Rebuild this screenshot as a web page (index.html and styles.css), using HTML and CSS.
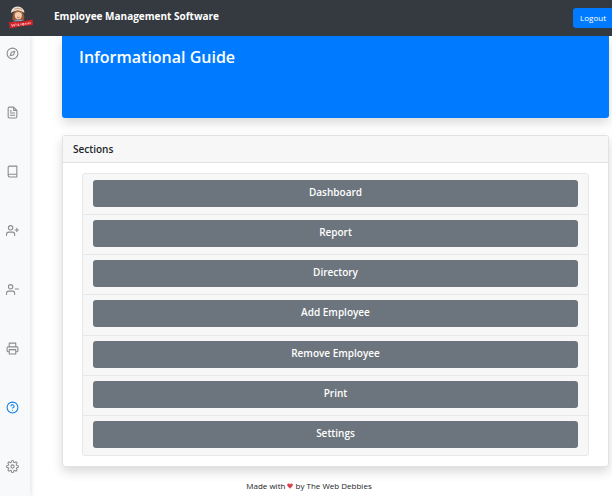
FILE: index.html
```html
<!DOCTYPE html>
<html lang="en">
<head>
<meta charset="utf-8">
<title>Employee Management Software</title>
<link rel="stylesheet" href="styles.css">
</head>
<body>
<header class="navbar">
  <svg class="logo" viewBox="0 0 26 24" aria-hidden="true">
    <path d="M4.500 14.500 Q4 8 6.500 5.500 L14 5.500 Q17 9 16 14.500Z" fill="#9a5a38"/>
    <path d="M3 7 Q3 1 9.500 .5 Q16 1 16.500 7 Q14 4.500 9.800 4.500 Q5.500 4.500 3 7Z" fill="#eadfce"/>
    <path d="M6 3 Q10 1 14 3 L14 3.800 Q10 2.300 6 3.800Z" fill="#c79a78"/>
    <ellipse cx="10.300" cy="9" rx="3.600" ry="4.200" fill="#f3cbae"/>
    <path d="M6.500 8 Q7 4.500 10.300 4.600 Q13.500 4.500 14 8 Q12 5.800 10.300 6 Q8.500 5.800 6.500 8Z" fill="#b0663c"/>
    <path d="M9 11 Q10.300 12.200 11.600 11" stroke="#c0392b" stroke-width=".7" fill="none"/>
    <path d="M5 15.500 Q10 12 15.500 15Z" fill="#7fa6cc"/>
    <path d="M1 16 Q12 16.500 24.500 13.500 L25 19 Q13 19.500 1.800 22.500Z" fill="#d2232a"/>
    <path d="M3.500 18 L4.500 20.500 L5.500 18.500 L6.500 20.200 L7.300 17.500 M9 17.700 V19.700 M10.500 17.700 V19.500 H11.500 M13 17.400 V19.200 M14.500 17.500 H16 V19 H14.500Z M17.500 17 V18.500 M19 16.700 V18.500 M20.500 16.500 V18.300 M22 16 V18" stroke="#f6c9cb" stroke-width=".8" fill="none"/>
  </svg>
  <span class="brand">Employee Management Software</span>
  <button class="logout" type="button">Logout</button>
</header>
<div class="shell">
  <nav class="sidebar" aria-label="Main">
    <a href="#" aria-label="Dashboard"><svg viewBox="0 0 24 24"><circle cx="12" cy="12" r="10"/><path d="M16.240 7.760 14.120 14.120 7.760 16.240 9.880 9.880Z"/></svg></a>
    <a href="#" aria-label="Report"><svg viewBox="0 0 24 24"><path d="M14 2H6a2 2 0 0 0-2 2v16a2 2 0 0 0 2 2h12a2 2 0 0 0 2-2V8z M14 2v6h6 M16 13H8 M16 17H8 M10 9H8"/></svg></a>
    <a href="#" aria-label="Directory"><svg viewBox="0 0 24 24"><path d="M4 19.500A2.500 2.500 0 0 1 6.500 17H20 M6.500 2H20v20H6.500A2.500 2.500 0 0 1 4 19.500v-15A2.500 2.500 0 0 1 6.500 2z"/></svg></a>
    <a href="#" aria-label="Add Employee"><svg viewBox="0 0 24 24"><path d="M16 21v-2a4 4 0 0 0-4-4H5a4 4 0 0 0-4 4v2 M20 8v6 M23 11h-6"/><circle cx="8.500" cy="7" r="4"/></svg></a>
    <a href="#" aria-label="Remove Employee"><svg viewBox="0 0 24 24"><path d="M16 21v-2a4 4 0 0 0-4-4H5a4 4 0 0 0-4 4v2 M23 11h-6"/><circle cx="8.500" cy="7" r="4"/></svg></a>
    <a href="#" aria-label="Print"><svg viewBox="0 0 24 24"><path d="M6 9V2h12v7 M6 18H4a2 2 0 0 1-2-2v-5a2 2 0 0 1 2-2h16a2 2 0 0 1 2 2v5a2 2 0 0 1-2 2h-2 M6 14h12v8H6z"/></svg></a>
    <a href="#" class="active" aria-label="Help"><svg viewBox="0 0 24 24"><circle cx="12" cy="12" r="10"/><path d="M9.090 9a3 3 0 0 1 5.830 1c0 2-3 3-3 3 M12 17h.01"/></svg></a>
    <a href="#" aria-label="Settings"><svg viewBox="0 0 24 24"><circle cx="12" cy="12" r="3"/><path d="M19.400 15a1.650 1.650 0 0 0 .33 1.820l.06.06a2 2 0 0 1-2.830 2.830l-.06-.06a1.650 1.650 0 0 0-2.800 1.170V21a2 2 0 0 1-4 0v-.09A1.650 1.650 0 0 0 7.180 19.730l-.06.06a2 2 0 0 1-2.830-2.830l.06-.06A1.650 1.650 0 0 0 3.180 14H3a2 2 0 0 1 0-4h.09A1.650 1.650 0 0 0 4.270 7.180l-.06-.06a2 2 0 0 1 2.830-2.830l.06.06A1.650 1.650 0 0 0 10 3.180V3a2 2 0 0 1 4 0v.09a1.650 1.650 0 0 0 2.820 1.180l.06-.06a2 2 0 0 1 2.830 2.830l-.06.06A1.650 1.650 0 0 0 20.820 10H21a2 2 0 0 1 0 4h-.09a1.650 1.650 0 0 0-1.510 1z"/></svg></a>
  </nav>
  <div class="content">
    <main>
      <section class="banner"><h1>Informational Guide</h1></section>
      <section class="card">
        <h2>Sections</h2>
        <ul class="sections">
          <li><button type="button">Dashboard</button></li>
          <li><button type="button">Report</button></li>
          <li><button type="button">Directory</button></li>
          <li><button type="button">Add Employee</button></li>
          <li><button type="button">Remove Employee</button></li>
          <li><button type="button">Print</button></li>
          <li><button type="button">Settings</button></li>
        </ul>
      </section>
    </main>
    <footer>Made with <svg class="heart" viewBox="0 0 16 16" role="img" aria-label="love"><path d="M8 15 2 8.500C-1 5 1 1.500 4.300 1.500 6 1.500 7.300 2.500 8 4c.7-1.500 2-2.500 3.700-2.500C15 1.500 17 5 14 8.500z"/></svg> by The Web Debbies</footer>
  </div>
</div>
</body>
</html>
```
FILE: styles.css
```css
* { box-sizing: border-box; }

body {
  margin: 0;
  min-height: 100vh;
  display: flex;
  flex-direction: column;
  overflow-x: hidden;
  background: #fff;
  color: #212529;
  font-family: "Open Sans", "Noto Sans", sans-serif;
  font-size: 10px;
}

button {
  border: 0;
  border-radius: 3px;
  color: #fff;
  font: inherit;
}

.navbar {
  display: flex;
  align-items: center;
  height: 36px;
  padding-left: 8px;
  background: #343a40;
  position: relative;
  z-index: 2;
}

.logo { width: 26px; height: 24px; }

.brand {
  margin-left: 20px;
  padding-bottom: 4px;
  color: #fff;
  font-weight: 700;
}

.logout {
  height: 20px;
  margin-left: auto;
  padding: 0 6px 2px 7px;
  border-radius: 3px 0 0 3px;
  background: #007bff;
  font-size: 8px;
}

.shell { flex: 1; display: flex; }

.sidebar {
  display: flex;
  flex-direction: column;
  gap: 46px;
  width: 30px;
  padding: 11px 6px;
  background: #f8f9fa;
  box-shadow: 1px 0 5px rgba(0, 0, 0, .12);
}

.sidebar a { display: block; height: 13px; color: #8c8c8c; }
.sidebar .active { color: #0f7fee; }

.sidebar svg {
  display: block;
  width: 13px;
  height: 13px;
  fill: none;
  stroke: currentColor;
  stroke-width: 2;
  stroke-linecap: round;
  stroke-linejoin: round;
}

.content { flex: 1; min-width: 0; }

main { padding: 0 3px 0 32px; }

.banner {
  min-height: 82px;
  padding: 8px 17px;
  border-radius: 0 0 3px 3px;
  background: #007bff;
  box-shadow: 0 5px 11px rgba(0, 0, 0, .15);
}

h1 {
  margin: 0;
  color: #fff;
  font-size: 16px;
  line-height: 26px;
  font-weight: 600;
}

.card {
  margin-top: 17px;
  border: 1px solid #e2e2e2;
  border-radius: 3px;
  background: #fff;
  box-shadow: 0 5px 11px rgba(0, 0, 0, .15);
}

h2 {
  margin: 0;
  padding: 0 10px;
  border-bottom: 1px solid #e2e2e2;
  background: #f7f7f7;
  font-size: 10px;
  line-height: 26px;
  font-weight: 600;
}

.sections {
  display: grid;
  grid-auto-rows: 1fr;
  min-height: 283px;
  margin: 10px 19px;
  padding: 0;
  border: 1px solid #e8e8e8;
  border-radius: 3px;
  background: #f7f7f7;
  list-style: none;
}

.sections li { display: flex; align-items: start; padding: 6px 10px; }
.sections li + li { padding-top: 5px; border-top: 1px solid #e8e8e8; }

.sections button {
  width: 100%;
  height: 27px;
  padding: 0 0 3px;
  background: #6c757d;
  font-weight: 600;
}

footer {
  padding: 11px 24px 0 0;
  font-size: 8px;
  line-height: 16px;
  text-align: center;
}

.heart { width: 6px; height: 6px; fill: #d9434e; }
```
